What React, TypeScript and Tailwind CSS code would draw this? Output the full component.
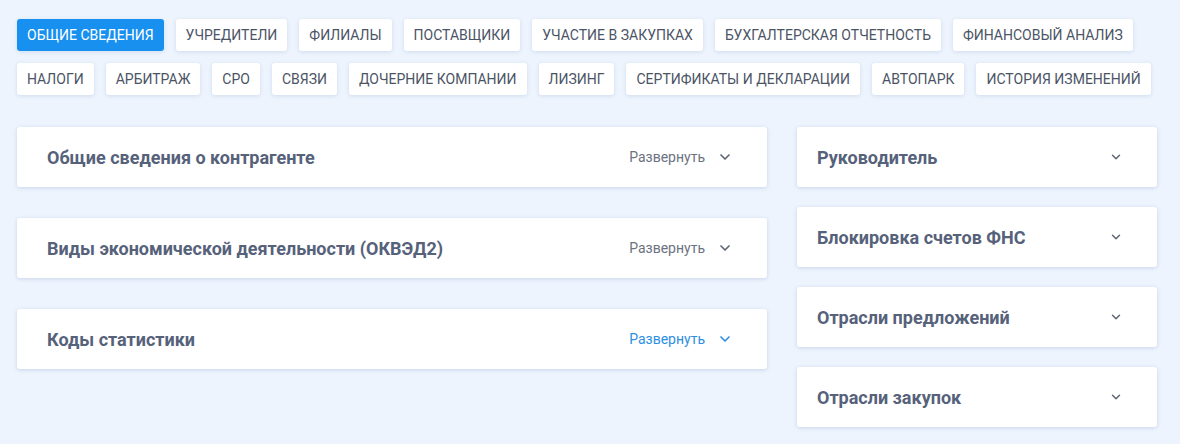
import React from 'react';
import { ChevronDown } from 'lucide-react';

const row1 = ['Общие сведения', 'Учредители', 'Филиалы', 'Поставщики', 'Участие в закупках', 'Бухгалтерская отчетность', 'Финансовый анализ'];
const row2 = ['Налоги', 'Арбитраж', 'СРО', 'Связи', 'Дочерние компании', 'Лизинг', 'Сертификаты и декларации', 'Автопарк', 'История изменений'];

const leftCards = [
  { title: 'Общие сведения о контрагенте', active: false },
  { title: 'Виды экономической деятельности (ОКВЭД2)', active: false },
  { title: 'Коды статистики', active: true },
];

const rightCards = ['Руководитель', 'Блокировка счетов ФНС', 'Отрасли предложений', 'Отрасли закупок'];

const Tab: React.FC<{ label: string; active?: boolean }> = ({ label, active }) => (
  <button
    className={
      active
        ? 'h-8 shrink-0 whitespace-nowrap px-[10px] rounded-[3px] bg-[#1790f0] text-white text-[14px] uppercase shadow-[0_1px_4px_rgba(40,80,140,0.15)]'
        : 'h-8 shrink-0 whitespace-nowrap px-[10px] rounded-[3px] bg-white text-[#4b5465] text-[14px] uppercase shadow-[0_1px_4px_rgba(40,80,140,0.15)]'
    }
  >
    {label}
  </button>
);

export default function App() {
  return (
    <div className="min-h-[444px] bg-[#edf4fd] px-[17px] pt-[19px] font-['Roboto',sans-serif]">
      <div className="w-[1140px]">
        {/* Tabs */}
        <div className="flex flex-col gap-3">
          <div className="flex gap-3">
            {row1.map((t, i) => (
              <Tab key={t} label={t} active={i === 0} />
            ))}
          </div>
          <div className="flex gap-3">
            {row2.map(t => (
              <Tab key={t} label={t} />
            ))}
          </div>
        </div>

        {/* Content */}
        <div className="flex gap-[30px] mt-8">
          <div className="w-[750px] flex flex-col gap-[31px]">
            {leftCards.map(c => (
              <div
                key={c.title}
                className="h-[60px] bg-white rounded-[3px] shadow-[0_1px_4px_rgba(40,80,140,0.18)] flex items-center pl-[30px] pr-[34px]"
              >
                <h3 className="flex-1 text-[18px] font-bold text-[#56617a]">{c.title}</h3>
                <span className={c.active ? 'text-[14px] text-[#2e8fe2]' : 'text-[14px] text-[#6b7280]'}>
                  Развернуть
                </span>
                <ChevronDown
                  className={c.active ? 'ml-[12px] text-[#2e8fe2]' : 'ml-[12px] text-[#5d6472]'}
                  size={16}
                  strokeWidth={2.5}
                />
              </div>
            ))}
          </div>
          <div className="w-[360px] flex flex-col gap-5">
            {rightCards.map(t => (
              <div
                key={t}
                className="h-[60px] bg-white rounded-[3px] shadow-[0_1px_4px_rgba(40,80,140,0.18)] flex items-center pl-5 pr-[34px]"
              >
                <h3 className="flex-1 text-[18px] font-bold text-[#56617a]">{t}</h3>
                <ChevronDown className="text-[#5d6472]" size={14} strokeWidth={2.5} />
              </div>
            ))}
          </div>
        </div>
      </div>
    </div>
  );
}
